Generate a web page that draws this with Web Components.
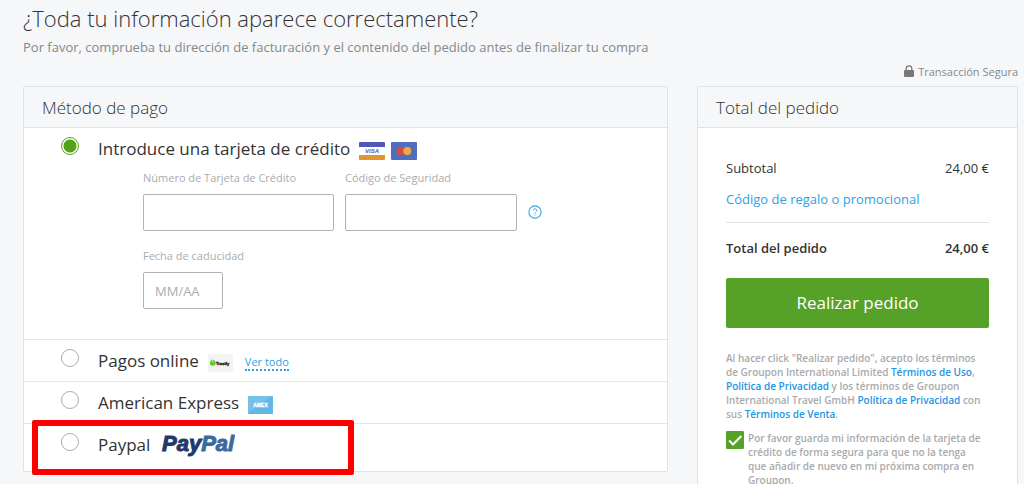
<!DOCTYPE html>
<html lang="es">
<head>
<meta charset="utf-8">
<meta name="viewport" content="width=device-width, initial-scale=1">
<title>Finalizar compra</title>
<style>
html{
    scrollbar-width: none;
}
body{
    margin: 0;
    background: #f6f7f9;
    color: #333;
    font-family: "Open Sans", "Noto Sans", sans-serif;
}
</style>
</head>
<body>
<checkout-page>
    <panel-card heading="Método de pago">
        <payment-methods>
            <payment-option label="Introduce una tarjeta de crédito" checked>
                <brand-logo slot="logos" name="visa"></brand-logo>
                <brand-logo slot="logos" name="mastercard"></brand-logo>
                <card-form></card-form>
            </payment-option>
            <payment-option label="Pagos online" more="Ver todo">
                <brand-logo slot="logos" name="trustly"></brand-logo>
            </payment-option>
            <payment-option label="American Express">
                <brand-logo slot="logos" name="amex"></brand-logo>
            </payment-option>
            <payment-option label="Paypal" highlight>
                <brand-logo slot="logos" name="paypal"></brand-logo>
            </payment-option>
        </payment-methods>
    </panel-card>
    <panel-card slot="aside" heading="Total del pedido">
        <order-summary></order-summary>
    </panel-card>
</checkout-page>

<script>
function attach(element, html){
    const template = document.createElement('template');
    template.innerHTML = html;
    const root = element.attachShadow({ mode: 'open' });
    root.appendChild(template.content.cloneNode(true));
    return root;
}

class CheckoutPage extends HTMLElement {
    constructor(){
        super();
        attach(this, `
<style>
:host{
    display: block;
    padding: 3px 6px 0 23px;
}
h1{
    margin: 0;
    font-size: 22px;
    line-height: 30px;
    font-weight: 300;
}
.intro{
    margin: 4px 0 0;
    font-size: 13px;
    line-height: 20px;
    color: #86888a;
}
.secure{
    display: flex;
    justify-content: flex-end;
    align-items: center;
    gap: 4px;
    margin: 7px 0 6px;
    font-size: 11px;
    line-height: 16px;
    color: #86888a;
}
.secure svg{
    width: 10px;
    height: 12px;
    margin-bottom: 3px;
}
.columns{
    display: grid;
    grid-template-columns: minmax(0, 1fr) 321px;
    gap: 29px;
    align-items: start;
}
</style>
<header>
    <h1>¿Toda tu información aparece correctamente?</h1>
    <p class="intro">Por favor, comprueba tu dirección de facturación y el contenido del pedido antes de finalizar tu compra</p>
</header>
<div class="secure">
    <svg viewBox="0 0 10 12" aria-hidden="true">
        <path d="M2.2 6V3.6a2.8 2.8 0 0 1 5.6 0V6" fill="none" stroke="#777" stroke-width="1.2"/>
        <rect y="5" width="10" height="7" rx="1" fill="#777"/>
    </svg>
    <span>Transacción Segura</span>
</div>
<main class="columns">
    <slot></slot>
    <slot name="aside"></slot>
</main>
`);
    }
}

class PanelCard extends HTMLElement {
    constructor(){
        super();
        this._root = attach(this, `
<style>
:host{
    display: block;
    background: #fff;
    border: 1px solid #dfe1e4;
    border-radius: 2px;
}
h2{
    margin: 0;
    padding: 9px 18px 7px;
    background: #f6f7f9;
    border-bottom: 1px solid #dfe1e4;
    font-size: 17px;
    line-height: 24px;
    font-weight: 300;
}
</style>
<h2></h2>
<slot></slot>
`);
    }

    connectedCallback(){
        this._root.querySelector('h2').textContent = this.getAttribute('heading');
    }
}

// Radios live in separate shadow roots, so the group is kept exclusive here
class PaymentMethods extends HTMLElement {
    constructor(){
        super();
        attach(this, `
<style>
:host{ display: block; }
</style>
<slot></slot>
`);
        this.addEventListener('option-selected', (event) => {
            this.querySelectorAll('payment-option').forEach((option) => {
                option.selected = option === event.target;
            });
        });
    }
}

class PaymentOption extends HTMLElement {
    constructor(){
        super();
        this._root = attach(this, `
<style>
:host{
    display: block;
    position: relative;
    border-top: 1px solid #e3e5e7;
}
:host(:first-child){
    border-top: 0;
}
.row{
    display: flex;
    align-items: flex-start;
    padding: 7px 37px 6px;
}
:host(:last-child) .row{
    padding-bottom: 12px;
}
input{
    appearance: none;
    flex: none;
    width: 18px;
    height: 18px;
    margin: 2px 19px 0 0;
    border: 1px solid #aaa;
    border-radius: 50%;
    background: #fff;
}
input:checked{
    border-color: #53a318;
    background: radial-gradient(circle, #53a318 6px, #fff 7px);
}
label{
    font-size: 17px;
    line-height: 27px;
}
.logos{
    display: flex;
    align-items: center;
    gap: 6px;
    height: 25px;
    margin: 3px 0 0 9px;
}
a{
    margin: 8px 0 0 12px;
    border-bottom: 2px dotted #2f9fe0;
    color: #2f9fe0;
    font-size: 11px;
    line-height: 14px;
    text-decoration: none;
}
.frame{
    display: none;
}
:host([highlight]) .frame{
    display: block;
    position: absolute;
    top: -4px;
    bottom: -4px;
    left: 8px;
    width: 310px;
    border: 6px solid #fe0000;
    border-radius: 2px;
    pointer-events: none;
}
</style>
<div class="row">
    <input type="radio" id="option" name="payment">
    <label for="option"></label>
    <div class="logos"><slot name="logos"></slot></div>
</div>
<slot></slot>
<div class="frame"></div>
`);
        this.$input = this._root.querySelector('input');
        this.$input.addEventListener('change', () => {
            this.dispatchEvent(new CustomEvent('option-selected', { bubbles: true }));
        });
    }

    set selected(value){
        this.$input.checked = value;
    }

    connectedCallback(){
        this._root.querySelector('label').textContent = this.getAttribute('label');
        this.selected = this.hasAttribute('checked');

        if (this.hasAttribute('more')) {
            const link = document.createElement('a');
            link.href = '#';
            link.textContent = this.getAttribute('more');
            this._root.querySelector('.row').appendChild(link);
        }
    }
}

class CardForm extends HTMLElement {
    constructor(){
        super();
        attach(this, `
<style>
:host{
    display: block;
    padding: 1px 18px 30px 119px;
}
.fields{
    display: flex;
    gap: 11px;
}
.expiry{
    margin-top: 17px;
}
.field{
    flex: 0 1 172px;
    min-width: 0;
}
.number{
    flex-basis: 191px;
}
.expiry .field{
    flex-basis: 80px;
    white-space: nowrap;
}
label{
    display: block;
    margin-bottom: 9px;
    font-size: 11px;
    line-height: 15px;
    color: #aaacae;
}
input{
    box-sizing: border-box;
    display: block;
    width: 100%;
    height: 37px;
    padding: 0 11px;
    border: 1px solid #b0b2b4;
    border-radius: 2px;
    background: #fff;
    color: #333;
    font: 13px "Open Sans", sans-serif;
}
input::placeholder{
    color: #aaacae;
}
button{
    align-self: flex-end;
    width: 14px;
    height: 14px;
    margin-bottom: 12px;
    padding: 0;
    border: 0;
    background: none;
}
svg{
    display: block;
}
</style>
<div class="fields">
    <div class="field number">
        <label for="number">Número de Tarjeta de Crédito</label>
        <input id="number" type="text" inputmode="numeric">
    </div>
    <div class="field">
        <label for="code">Código de Seguridad</label>
        <input id="code" type="text" inputmode="numeric">
    </div>
    <button type="button" aria-label="Ayuda">
        <svg width="14" height="14" viewBox="0 0 14 14" fill="none" stroke="#36a5e6">
            <circle cx="7" cy="7" r="6.1" stroke-width="1.1"/>
            <path d="M5.2 5.6C5.2 4.4 6 3.8 7 3.8s1.8.6 1.8 1.6C8.8 6.6 7 6.7 7 8.3M7 9.3v1.1"/>
        </svg>
    </button>
</div>
<div class="fields expiry">
    <div class="field">
        <label for="expiry">Fecha de caducidad</label>
        <input id="expiry" type="text" placeholder="MM/AA">
    </div>
</div>
`);
    }
}

const logos = {
    visa: `
<svg width="26" height="18" viewBox="0 0 26 18">
    <rect width="26" height="18" rx="1" fill="#fff"/>
    <path d="M1 0h24a1 1 0 0 1 1 1v4H0V1a1 1 0 0 1 1-1z" fill="#5157b8"/>
    <path d="M0 13h26v4a1 1 0 0 1-1 1H1a1 1 0 0 1-1-1z" fill="#e0952f"/>
    <text x="13" y="11" text-anchor="middle" font-size="6" font-weight="700" font-style="italic" fill="#5157b8">VISA</text>
</svg>`,
    mastercard: `
<svg width="26" height="18" viewBox="0 0 26 18">
    <rect width="26" height="18" rx="1" fill="#506dc0"/>
    <circle cx="9.5" cy="9" r="4" fill="#dc493f"/>
    <circle cx="16.3" cy="9" r="4" fill="#f2a840"/>
</svg>`,
    trustly: `
<svg width="25" height="18" viewBox="0 0 25 18">
    <rect width="25" height="18" rx="1" fill="#f3f3f3"/>
    <path d="M2 7.5h5.500v3.200q-2.700 2-5.500 0z" fill="#64c832"/>
    <path d="M3.2 8V6.800q1.600-1.600 3.100 0V8" fill="none" stroke="#64c832"/>
    <text x="8" y="11" font-size="4" font-weight="700" fill="#111" stroke="#111" stroke-width=".3">Trustly</text>
</svg>`,
    amex: `
<svg width="25" height="18" viewBox="0 0 25 18">
    <rect width="25" height="18" rx="1" fill="#62b8e5"/>
    <path d="M1 0h23L0 17V1a1 1 0 0 1 1-1z" fill="#73c1e8"/>
    <text x="12.5" y="11" text-anchor="middle" font-size="5" font-weight="700" fill="#fff" stroke="#fff" stroke-width=".3">AMEX</text>
</svg>`,
    paypal: `
<svg width="76" height="26" viewBox="0 0 76 26">
    <text x="3" y="17" font-size="22" font-weight="700" font-style="italic" fill="#20386b" stroke="#20386b" stroke-width="1">Pay<tspan fill="#386a9e" stroke="#386a9e">Pal</tspan></text>
</svg>`
};

class BrandLogo extends HTMLElement {
    constructor(){
        super();
        this._root = attach(this, `
<style>
:host{ display: block; }
svg{ display: block; }
text{ font-family: "Liberation Sans", Arial, sans-serif; }
</style>
<div></div>
`);
    }

    connectedCallback(){
        this._root.querySelector('div').innerHTML = logos[this.getAttribute('name')];
    }
}

class OrderSummary extends HTMLElement {
    constructor(){
        super();
        attach(this, `
<style>
:host{
    display: block;
    padding: 30px 28px;
    font-size: 13px;
    line-height: 20px;
}
a{
    color: #2f9fe0;
    text-decoration: none;
}
.line{
    display: flex;
    justify-content: space-between;
}
.promo{
    padding: 11px 0 13px;
    border-bottom: 1px solid #dfe1e4;
}
.total{
    margin: 15px 0 20px;
    font-weight: 600;
}
button{
    display: block;
    width: 100%;
    padding: 13px;
    border: 0;
    border-radius: 2px;
    background: #56a228;
    color: #fff;
    font: 17px/24px "Open Sans", sans-serif;
}
.legal, .save{
    font-size: 10px;
    line-height: 14px;
    font-weight: 600;
    color: #a8aaac;
}
.legal{
    margin: 23px 0 10px;
}
.legal a{
    color: #2196e3;
}
.save{
    display: flex;
    align-items: flex-start;
    gap: 4px;
    padding-right: 4px;
}
.save input{
    appearance: none;
    flex: none;
    width: 18px;
    height: 18px;
    margin: 0;
    border: 1px solid #56a228;
    border-radius: 1px;
}
.save input:checked{
    background: #56a228;
}
/* the tick lies over the box */
.tick{
    display: grid;
}
.tick > *{
    grid-area: 1 / 1;
}
.tick svg{
    pointer-events: none;
}
.tick input:not(:checked) + svg{
    display: none;
}
</style>
<div class="line"><span>Subtotal</span><span>24,00 €</span></div>
<div class="promo"><a href="#">Código de regalo o promocional</a></div>
<div class="line total"><span>Total del pedido</span><span>24,00 €</span></div>
<button type="button">Realizar pedido</button>
<p class="legal">Al hacer click "Realizar pedido", acepto los términos de Groupon International Limited <a href="#">Términos de Uso</a>, <a href="#">Política de Privacidad</a> y los términos de Groupon International Travel GmbH <a href="#">Política de Privacidad</a> con sus <a href="#">Términos de Venta</a>.</p>
<div class="save">
    <span class="tick">
        <input type="checkbox" id="save" checked>
        <svg width="18" height="18" viewBox="0 0 18 18" fill="none" stroke="#fff" stroke-width="2" aria-hidden="true">
            <path d="M3.2 9.5l3.8 4L15.3 5"/>
        </svg>
    </span>
    <label for="save">Por favor guarda mi información de la tarjeta de crédito de forma segura para que no la tenga que añadir de nuevo en mi próxima compra en Groupon.</label>
</div>
`);
    }
}

customElements.define('brand-logo', BrandLogo);
customElements.define('card-form', CardForm);
customElements.define('payment-option', PaymentOption);
customElements.define('payment-methods', PaymentMethods);
customElements.define('order-summary', OrderSummary);
customElements.define('panel-card', PanelCard);
customElements.define('checkout-page', CheckoutPage);
</script>
</body>
</html>
